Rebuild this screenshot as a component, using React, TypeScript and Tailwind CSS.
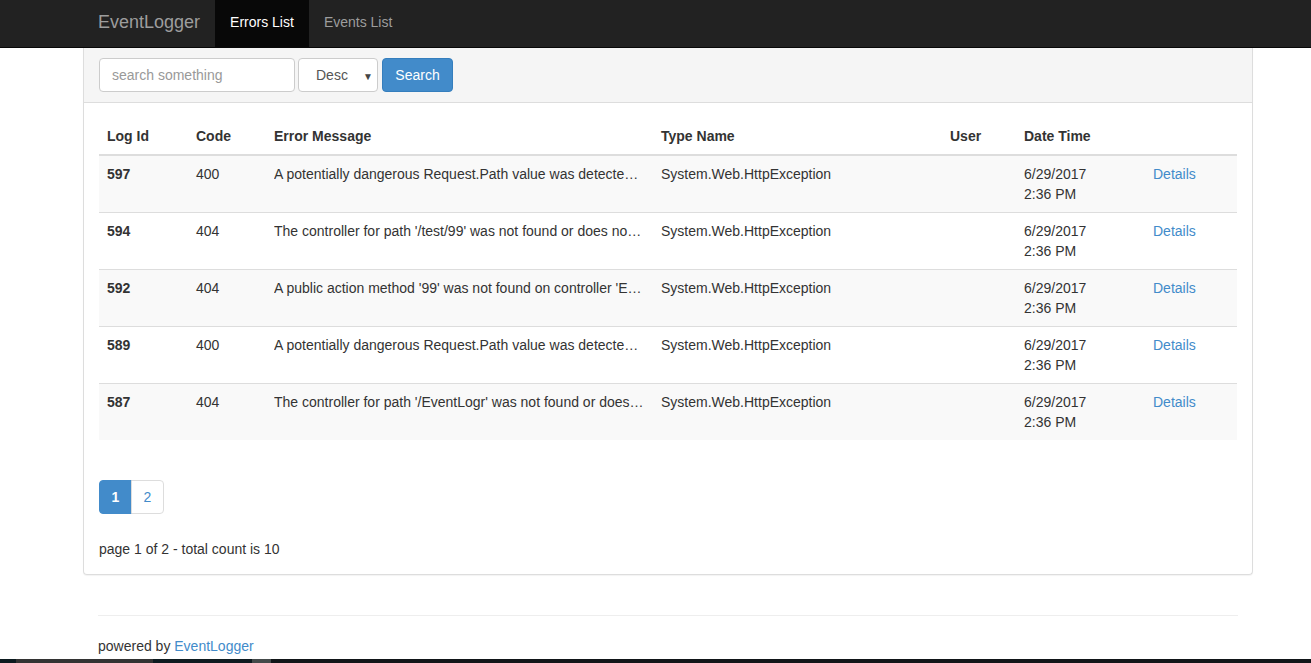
import React from "react";

const rows = [
  { id: "597", code: "400", msg: "A potentially dangerous Request.Path value was detected from the client (:).", type: "System.Web.HttpException" },
  { id: "594", code: "404", msg: "The controller for path '/test/99' was not found or does not implement IController.", type: "System.Web.HttpException" },
  { id: "592", code: "404", msg: "A public action method '99' was not found on controller 'EventLogger.Controllers'.", type: "System.Web.HttpException" },
  { id: "589", code: "400", msg: "A potentially dangerous Request.Path value was detected from the client (:).", type: "System.Web.HttpException" },
  { id: "587", code: "404", msg: "The controller for path '/EventLogr' was not found or does not implement IController.", type: "System.Web.HttpException" },
];

export default function App() {
  return (
    <div
      className="h-[663px] w-full flex flex-col bg-white text-[14px] leading-[20px] text-[#333] overflow-hidden"
      style={{ fontFamily: '"Liberation Sans", Arial, sans-serif' }}
    >
      {/* Navbar */}
      <div className="h-[48px] bg-[#222] border-b border-[#080808] shrink-0">
        <div className="ml-[83px] w-[1170px] flex h-[47px]">
          <div className="px-[15px] flex items-center pb-[4px] text-[18px] text-[#9d9d9d]">EventLogger</div>
          <div className="px-[15px] flex items-center pb-[4px] bg-[#080808] text-white">Errors List</div>
          <div className="px-[15px] flex items-center pb-[4px] text-[#9d9d9d]">Events List</div>
        </div>
      </div>

      {/* Panel */}
      <div className="ml-[83px] w-[1170px] border border-t-0 border-[#ddd] rounded-b-[4px] shadow-[0_1px_1px_rgba(0,0,0,0.05)] shrink-0">
        <div className="h-[55px] bg-[#f5f5f5] border-b border-[#ddd] flex items-center pl-[15px]">
          <input
            className="w-[196px] h-[34px] border border-[#ccc] rounded-[4px] bg-white px-[12px] text-[14px] text-[#555] placeholder:text-[#999] outline-none"
            placeholder="search something"
          />
          <div className="relative ml-[3px] w-[80px] h-[34px] border border-[#ccc] rounded-[4px] bg-white flex items-center text-[#555]">
            <span className="pl-[17px]">Desc</span>
            <span className="absolute right-[4px] top-[8px] text-[10px] text-[#444]">▼</span>
          </div>
          <button className="ml-[4px] w-[71px] h-[34px] rounded-[4px] bg-[#428bca] border border-[#357ebd] text-white text-[14px]">
            Search
          </button>
        </div>

        <div className="p-[15px]">
          <table className="w-[1138px] table-fixed border-collapse">
            <colgroup>
              <col className="w-[89px]" />
              <col className="w-[78px]" />
              <col className="w-[387px]" />
              <col className="w-[289px]" />
              <col className="w-[74px]" />
              <col className="w-[129px]" />
              <col className="w-[92px]" />
            </colgroup>
            <thead>
              <tr className="border-b-2 border-[#ddd]">
                <th className="text-left font-bold p-[8px]">Log Id</th>
                <th className="text-left font-bold p-[8px]">Code</th>
                <th className="text-left font-bold p-[8px]">Error Message</th>
                <th className="text-left font-bold p-[8px]">Type Name</th>
                <th className="text-left font-bold p-[8px]">User</th>
                <th className="text-left font-bold p-[8px]">Date Time</th>
                <th className="text-left font-bold p-[8px]"></th>
              </tr>
            </thead>
            <tbody>
              {rows.map((r, i) => (
                <tr key={r.id} className={`${i % 2 === 0 ? "bg-[#f9f9f9]" : "bg-white"} ${i < rows.length - 1 ? "border-b border-[#ddd]" : ""}`}>
                  <td className="p-[8px] align-top font-bold">{r.id}</td>
                  <td className="p-[8px] align-top">{r.code}</td>
                  <td className="p-[8px] align-top">
                    <div className="truncate">{r.msg}</div>
                  </td>
                  <td className="p-[8px] align-top">{r.type}</td>
                  <td className="p-[8px] align-top"></td>
                  <td className="p-[8px] align-top">
                    6/29/2017
                    <br />
                    2:36 PM
                  </td>
                  <td className="p-[8px] align-top text-[#428bca]">Details</td>
                </tr>
              ))}
            </tbody>
          </table>

          <div className="flex mt-[40px] mb-[25px]">
            <div className="w-[33px] h-[34px] flex items-center justify-center bg-[#428bca] border border-[#428bca] rounded-l-[4px] text-white font-bold">1</div>
            <div className="w-[33px] h-[34px] flex items-center justify-center border border-[#ddd] -ml-px rounded-r-[4px] text-[#428bca]">2</div>
          </div>

          <div>page 1 of 2 - total count is 10</div>
        </div>
      </div>

      {/* Footer */}
      <div className="ml-[98px] w-[1140px] mt-[40px] border-t border-[#eee] pt-[20px] shrink-0">
        <div>
          powered by <span className="text-[#428bca]">EventLogger</span>
        </div>
      </div>

      <div className="mt-auto h-[4px] flex shrink-0">
        <div className="w-[16px] bg-[#0c1a1f]" />
        <div className="w-[137px] bg-[#333]" />
        <div className="w-[99px] bg-[#0e1b20]" />
        <div className="w-[19px] bg-[#444a4a]" />
        <div className="flex-1 bg-[#111518]" />
      </div>
    </div>
  );
}
